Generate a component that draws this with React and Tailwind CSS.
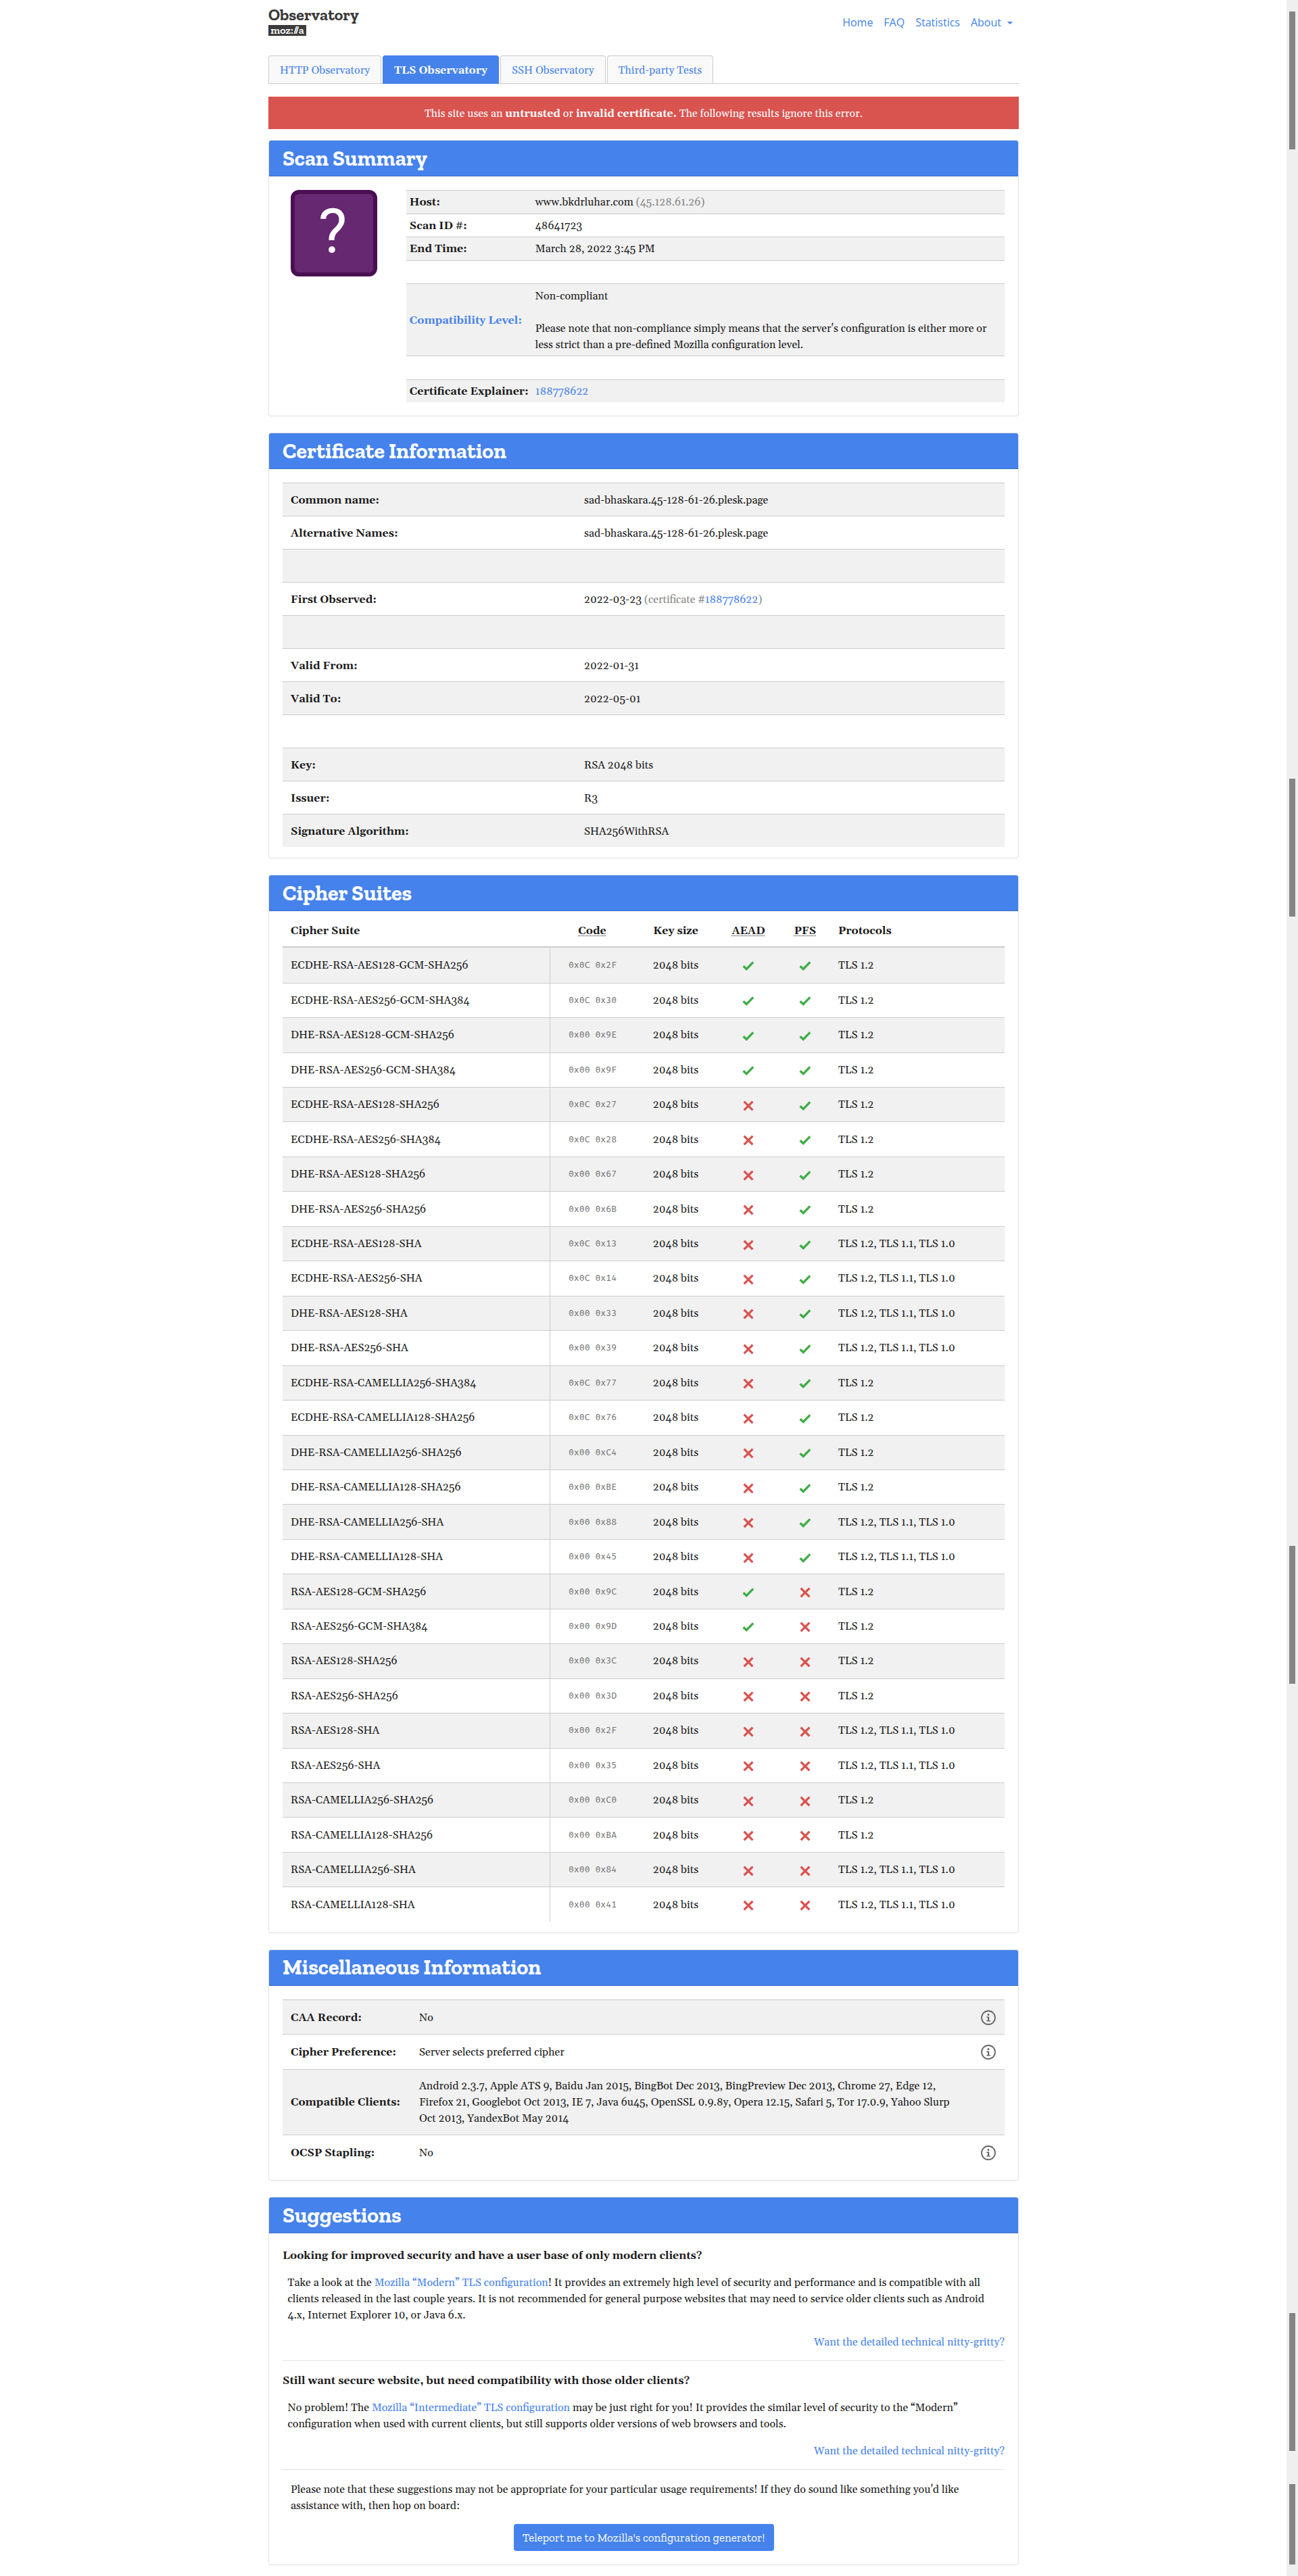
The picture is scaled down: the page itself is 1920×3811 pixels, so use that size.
import React from 'react';

const CIPHERS = [
  ['ECDHE-RSA-AES128-GCM-SHA256', '0x0C 0x2F', 1, 1, 0],
  ['ECDHE-RSA-AES256-GCM-SHA384', '0x0C 0x30', 1, 1, 0],
  ['DHE-RSA-AES128-GCM-SHA256', '0x00 0x9E', 1, 1, 0],
  ['DHE-RSA-AES256-GCM-SHA384', '0x00 0x9F', 1, 1, 0],
  ['ECDHE-RSA-AES128-SHA256', '0x0C 0x27', 0, 1, 0],
  ['ECDHE-RSA-AES256-SHA384', '0x0C 0x28', 0, 1, 0],
  ['DHE-RSA-AES128-SHA256', '0x00 0x67', 0, 1, 0],
  ['DHE-RSA-AES256-SHA256', '0x00 0x6B', 0, 1, 0],
  ['ECDHE-RSA-AES128-SHA', '0x0C 0x13', 0, 1, 1],
  ['ECDHE-RSA-AES256-SHA', '0x0C 0x14', 0, 1, 1],
  ['DHE-RSA-AES128-SHA', '0x00 0x33', 0, 1, 1],
  ['DHE-RSA-AES256-SHA', '0x00 0x39', 0, 1, 1],
  ['ECDHE-RSA-CAMELLIA256-SHA384', '0x0C 0x77', 0, 1, 0],
  ['ECDHE-RSA-CAMELLIA128-SHA256', '0x0C 0x76', 0, 1, 0],
  ['DHE-RSA-CAMELLIA256-SHA256', '0x00 0xC4', 0, 1, 0],
  ['DHE-RSA-CAMELLIA128-SHA256', '0x00 0xBE', 0, 1, 0],
  ['DHE-RSA-CAMELLIA256-SHA', '0x00 0x88', 0, 1, 1],
  ['DHE-RSA-CAMELLIA128-SHA', '0x00 0x45', 0, 1, 1],
  ['RSA-AES128-GCM-SHA256', '0x00 0x9C', 1, 0, 0],
  ['RSA-AES256-GCM-SHA384', '0x00 0x9D', 1, 0, 0],
  ['RSA-AES128-SHA256', '0x00 0x3C', 0, 0, 0],
  ['RSA-AES256-SHA256', '0x00 0x3D', 0, 0, 0],
  ['RSA-AES128-SHA', '0x00 0x2F', 0, 0, 1],
  ['RSA-AES256-SHA', '0x00 0x35', 0, 0, 1],
  ['RSA-CAMELLIA256-SHA256', '0x00 0xC0', 0, 0, 0],
  ['RSA-CAMELLIA128-SHA256', '0x00 0xBA', 0, 0, 0],
  ['RSA-CAMELLIA256-SHA', '0x00 0x84', 0, 0, 1],
  ['RSA-CAMELLIA128-SHA', '0x00 0x41', 0, 0, 1],
];

const CERTIFICATE = [
  ['Common name:', 'sad-bhaskara.45-128-61-26.plesk.page'],
  ['Alternative Names:', 'sad-bhaskara.45-128-61-26.plesk.page'],
  ['', ''],
  [
    'First Observed:',
    <>
      2022-03-23{' '}
      <span className="text-[#868686]">
        (certificate #<Link>188778622</Link>)
      </span>
    </>,
  ],
  ['', ''],
  ['Valid From:', '2022-01-31'],
  ['Valid To:', '2022-05-01'],
  ['', ''],
  ['Key:', 'RSA 2048 bits'],
  ['Issuer:', 'R3'],
  ['Signature Algorithm:', 'SHA256WithRSA'],
];

function Link({ children }) {
  return <a className="text-[#4582ec]">{children}</a>;
}

function Mark({ ok }) {
  return ok ? (
    <svg className="mt-[3px] h-[16px] w-[18px]" viewBox="0 0 18 16">
      <path d="M1.6 8.2 6.2 12.7 16.2 2.4" fill="none" stroke="#3fad46" strokeWidth="3.4" />
    </svg>
  ) : (
    <svg className="mt-[3px] h-[16px] w-[16px]" viewBox="0 0 16 16">
      <path d="M1.6 1.6 14.4 14.4M14.4 1.6 1.6 14.4" fill="none" stroke="#d9534f" strokeWidth="3.3" />
    </svg>
  );
}

function Info() {
  return (
    <svg className="h-[22px] w-[22px]" viewBox="0 0 22 22">
      <circle cx="11" cy="11" r="10" fill="none" stroke="#666" strokeWidth="1.8" />
      <circle cx="11" cy="6.4" r="1.5" fill="#666" />
      <path d="M8.2 9.4H12.2V15H13.8V16.6H8.4V15H10V11H8.2Z" fill="#666" />
    </svg>
  );
}

function Card({ title, className, children }) {
  return (
    <section className="mb-6 rounded border border-[#dfdfdf] bg-white">
      <h2 className="flex h-[53px] items-center rounded-t-[3px] border-b border-[#3b6fc9] bg-[#4582ec] pl-5 font-['Zilla_Slab','Liberation_Serif',serif] text-[32px] leading-[35px] font-bold text-white">
        {title}
      </h2>
      <div className={className}>{children}</div>
    </section>
  );
}

function SummaryRow({ label, striped, children }) {
  return (
    <div className={`flex min-h-[34.6px] items-center border-t border-[#ccc] pt-[5.3px] pb-[4.3px] ${striped ? 'bg-[#f1f1f1]' : ''}`}>
      <div className="w-[186px] shrink-0 pl-[4.8px] font-bold">{label}</div>
      <div className="pl-[4.8px]">{children}</div>
    </div>
  );
}

function MiscRow({ label, striped, info, children }) {
  return (
    <div className={`flex min-h-[51.46px] items-center border-t border-[#ccc] pt-[12.7px] pb-[11.3px] ${striped ? 'bg-[#f1f1f1]' : ''}`}>
      <div className="w-[190px] shrink-0 pl-3 font-bold">{label}</div>
      <div className="w-[820px] shrink-0 pl-3">{children}</div>
      {info && (
        <div className="ml-auto flex h-6 items-center pr-[13px]">
          <Info />
        </div>
      )}
    </div>
  );
}

const CIPHER_GRID = 'grid grid-cols-[395px_126px_121px_94px_74px_1fr] items-center';
const ABBR = 'underline decoration-dotted decoration-1 underline-offset-[1.5px]';

export default function App() {
  return (
    <div className="flex h-[3811px] overflow-hidden bg-white font-['Gelasio','Liberation_Serif',serif] text-base leading-6 text-[#1a1a1a]">
      <div className="flex-1 pl-[397px]">
        <main className="w-[1110px]">
          <header className="flex h-[82px] justify-between">
            <div className="flex flex-col items-start pt-[7px] font-['Zilla_Slab','Liberation_Serif',serif] text-[#3a3a3a]">
              <div className="h-[30px] text-2xl leading-[29px] font-bold">Observatory</div>
              <div className="h-4 w-14 bg-[#3a3a3a] text-center text-base leading-[15px] font-semibold text-white">moz://a</div>
            </div>
            <nav className="flex h-6 gap-4 pt-[21px] pr-[9px] font-['Open_Sans',sans-serif] text-[#4582ec]">
              <a>Home</a>
              <a>FAQ</a>
              <a>Statistics</a>
              <a className="flex">
                About
                <span className="mt-[11px] ml-[9px] h-0 w-0 border-x-4 border-t-4 border-x-transparent border-t-[#4582ec]" />
              </a>
            </nav>
          </header>

          <div className="flex h-[42px] gap-0.5 border-b border-[#ccc]">
            <a className="rounded-t border border-b-0 border-[#ccc] bg-[#f9f9f9] px-4 pt-[9px] text-[#4582ec]">HTTP Observatory</a>
            <a className="-mb-px rounded-t border border-b-0 border-[#4582ec] bg-[#4582ec] px-4 pt-[9px] font-bold text-white">TLS Observatory</a>
            <a className="rounded-t border border-b-0 border-[#ccc] bg-[#f9f9f9] px-4 pt-[9px] text-[#4582ec]">SSH Observatory</a>
            <a className="rounded-t border border-b-0 border-[#ccc] bg-[#f9f9f9] px-4 pt-[9px] text-[#4582ec]">Third-party Tests</a>
          </div>

          <div className="mt-[19px] mb-4 bg-[#d9534f] pt-[13px] pb-[11px] text-center text-white">
            This site uses an <b>untrusted</b> or <b>invalid certificate.</b> The following results ignore this error.
          </div>

          <Card title="Scan Summary" className="flex py-5 pr-5 pl-8">
            <div className="flex h-32 w-32 shrink-0 items-center justify-center rounded-xl border-[6px] border-[#4a0f53] bg-[#662870] pr-1 pb-1 font-['Roboto',sans-serif] text-[90px] leading-none text-white">
              ?
            </div>
            <div className="ml-[43px] flex-1">
              <SummaryRow label="Host:" striped>
                www.bkdrluhar.com <span className="text-[#868686]">(45.128.61.26)</span>
              </SummaryRow>
              <SummaryRow label="Scan ID #:">48641723</SummaryRow>
              <SummaryRow label="End Time:" striped>March 28, 2022 3:45 PM</SummaryRow>
              <SummaryRow />
              <SummaryRow label={<Link>Compatibility Level:</Link>} striped>
                Non-compliant
                <br />
                <br />
                Please note that non-compliance simply means that the server's configuration is either more or less strict than a pre-defined Mozilla configuration level.
              </SummaryRow>
              <SummaryRow />
              <SummaryRow label="Certificate Explainer:" striped>
                <Link>188778622</Link>
              </SummaryRow>
            </div>
          </Card>

          <Card title="Certificate Information" className="px-5 pt-5 pb-4">
            {CERTIFICATE.map(([label, value], i) => (
              <div key={i} className="flex h-[49px] items-center border-t border-[#ccc] pt-0.5 odd:bg-[#f1f1f1]">
                <div className="w-[434px] pl-3 font-bold">{label}</div>
                <div className="pl-3">{value}</div>
              </div>
            ))}
          </Card>

          <Card title="Cipher Suites" className="px-5 pt-[3px] pb-4">
            <div className={`${CIPHER_GRID} h-[51px] border-b-2 border-[#ccc] pt-0.5 font-bold`}>
              <div className="pl-3">Cipher Suite</div>
              <div className="text-center"><span className={ABBR}>Code</span></div>
              <div className="text-center">Key size</div>
              <div className="text-center"><span className={ABBR}>AEAD</span></div>
              <div className="text-center"><span className={ABBR}>PFS</span></div>
              <div className="pl-3">Protocols</div>
            </div>
            <div>
              {CIPHERS.map(([name, code, aead, pfs, old]) => (
                <div key={name} className={`${CIPHER_GRID} h-[51.46px] border-t border-[#ccc] odd:bg-[#f1f1f1] first:border-t-0`}>
                  <div className="pl-3">{name}</div>
                  <div className="flex items-center justify-center self-stretch border-l border-[#ccc] font-['Fira_Mono','DejaVu_Sans_Mono',monospace] text-[13.2px] text-[#6f6f6f]">
                    {code}
                  </div>
                  <div className="text-center">2048 bits</div>
                  <div className="flex justify-center"><Mark ok={aead} /></div>
                  <div className="flex justify-center"><Mark ok={pfs} /></div>
                  <div className="pl-3">{old ? 'TLS 1.2, TLS 1.1, TLS 1.0' : 'TLS 1.2'}</div>
                </div>
              ))}
            </div>
          </Card>

          <Card title="Miscellaneous Information" className="px-5 pt-5 pb-4">
            <MiscRow label="CAA Record:" striped info>No</MiscRow>
            <MiscRow label="Cipher Preference:" info>Server selects preferred cipher</MiscRow>
            <MiscRow label="Compatible Clients:" striped>
              Android 2.3.7, Apple ATS 9, Baidu Jan 2015, BingBot Dec 2013, BingPreview Dec 2013, Chrome 27, Edge 12, Firefox 21, Googlebot Oct 2013, IE 7, Java 6u45, OpenSSL 0.9.8y, Opera 12.15, Safari 5, Tor 17.0.9, Yahoo Slurp Oct 2013, YandexBot May 2014
            </MiscRow>
            <MiscRow label="OCSP Stapling:" info>No</MiscRow>
          </Card>

          <Card title="Suggestions" className="flex flex-col gap-4 px-5 py-5 [&>h5]:-mb-px [&>h5]:pt-px [&>p]:-mb-px [&>p]:pt-px">
            <h5 className="font-bold">Looking for improved security and have a user base of only modern clients?</h5>
            <p className="px-[7.5px]">
              Take a look at the <Link>Mozilla “Modern” TLS configuration</Link>! It provides an extremely high level of security and performance and is compatible with all clients released in the last couple years. It is not recommended for general purpose websites that may need to service older clients such as Android 4.x, Internet Explorer 10, or Java 6.x.
            </p>
            <p className="text-right"><Link>Want the detailed technical nitty-gritty?</Link></p>
            <hr className="border-[#e3e3e3]" />
            <h5 className="font-bold">Still want secure website, but need compatibility with those older clients?</h5>
            <p className="px-[7.5px]">
              No problem! The <Link>Mozilla “Intermediate” TLS configuration</Link> may be just right for you! It provides the similar level of security to the “Modern” configuration when used with current clients, but still supports older versions of web browsers and tools.
            </p>
            <p className="text-right"><Link>Want the detailed technical nitty-gritty?</Link></p>
            <hr className="border-[#e3e3e3]" />
            <p className="px-3">
              Please note that these suggestions may not be appropriate for your particular usage requirements! If they do sound like something you'd like assistance with, then hop on board:
            </p>
            <button className="h-10 w-[385px] self-center rounded bg-[#4582ec] font-['Zilla_Slab','Liberation_Serif',serif] text-[17px] text-white">
              Teleport me to Mozilla's configuration generator!
            </button>
          </Card>
        </main>
      </div>

      <div className="flex w-[17px] flex-col items-center bg-[#efefef] pt-[17px]">
        <div className="h-[204px] w-[9px] shrink-0 bg-[#858585]" />
        <div className="mt-[931px] h-[204px] w-[9px] shrink-0 bg-[#858585]" />
        <div className="mt-[931px] h-[204px] w-[9px] shrink-0 bg-[#858585]" />
        <div className="mt-[931px] h-[204px] w-[9px] shrink-0 bg-[#858585]" />
        <div className="mt-[49px] h-[119px] w-[9px] shrink-0 bg-[#858585]" />
      </div>
    </div>
  );
}
